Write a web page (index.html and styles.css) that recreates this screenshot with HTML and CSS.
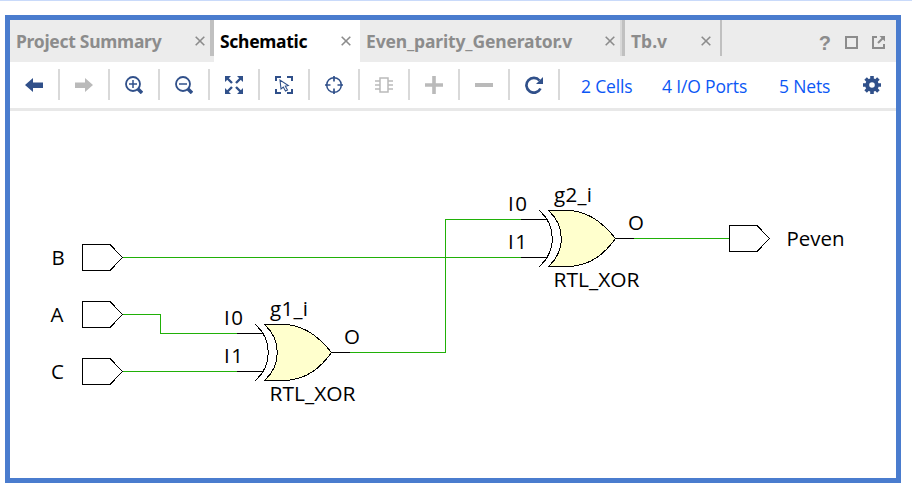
FILE: index.html
```html
<!DOCTYPE html>
<html lang="en">
<head>
<meta charset="utf-8">
<title>Schematic</title>
<link rel="stylesheet" href="styles.css">
</head>
<body>
<main class="window">
  <nav class="tabs">
    <div class="tab tab-summary"><span class="label">Project Summary</span><svg class="close" viewBox="0 0 10 10"><path d="M.7.7l8.6 8.6M9.3.7L.7 9.3"/></svg><i class="divider wide"></i></div>
    <div class="tab tab-schematic active"><span class="label">Schematic</span><svg class="close" viewBox="0 0 10 10"><path d="M.7.7l8.6 8.6M9.3.7L.7 9.3"/></svg></div>
    <div class="tab tab-source"><span class="label">Even_parity_Generator.v</span><svg class="close" viewBox="0 0 10 10"><path d="M.7.7l8.6 8.6M9.3.7L.7 9.3"/></svg><i class="divider double"></i></div>
    <div class="tab tab-bench"><span class="label">Tb.v</span><svg class="close" viewBox="0 0 10 10"><path d="M.7.7l8.6 8.6M9.3.7L.7 9.3"/></svg><i class="divider"></i></div>
    <div class="controls">
      <span class="help">?</span>
      <svg width="13" height="13" viewBox="0 0 13 13"><path d="M1 1h11v11H1z"/></svg>
      <svg width="13" height="13" viewBox="0 0 13 13"><path d="M5 1H1v11h11V8M6 7l5-5"/><path class="fill" d="M7.5 0H13v5.5z"/></svg>
    </div>
  </nav>
  <div class="toolbar">
    <div class="tool"><svg viewBox="0 0 18 18"><path class="solid" d="M0 9l8-7V6.500H18V12H8v4z"/></svg></div>
    <div class="tool off"><svg viewBox="0 0 18 18"><path class="solid" d="M18 9l-8-7V6.500H0V12H10v4z"/></svg></div>
    <div class="tool"><svg viewBox="0 0 18 18"><circle cx="8" cy="8" r="7" stroke-width="1.800"/><path d="M4 8h8M8 4v8" stroke-width="1.500"/><path d="M13 13l4 4" stroke-width="3.500"/></svg></div>
    <div class="tool"><svg viewBox="0 0 18 18"><circle cx="8" cy="8" r="7" stroke-width="1.800"/><path d="M4 8h8" stroke-width="1.500"/><path d="M13 13l4 4" stroke-width="3.500"/></svg></div>
    <div class="tool"><svg viewBox="0 0 18 18"><path d="M2 2l5 5M16 2l-5 5M2 16l5-5M16 16l-5-5" stroke-width="2.400"/><path class="solid" d="M0 0h6L0 6zM18 0h-6l6 6zM0 18h6l-6-6zM18 18h-6l6-6z"/></svg></div>
    <div class="tool"><svg viewBox="0 0 18 18"><path d="M1 5V1h5M12 1h5v4M1 13v4h5M12 17h5v-4" stroke-width="2"/><path d="M5 4l1 9 2.300-2 2.200 4 2-1-2.200-3.800 3-.7z" stroke-width="1.100"/></svg></div>
    <div class="tool"><svg viewBox="0 0 18 18"><circle cx="9" cy="9" r="7.300" stroke-width="1.500"/><path d="M9 0v5.500M9 12.500V18M0 9h5.500M12.500 9H18" stroke-width="1.700"/></svg></div>
    <div class="tool off"><svg viewBox="0 0 18 18"><path d="M5 2h8v14H5zM0 5h5M0 9h5M0 13h5M13 5h5M13 9h5M13 13h5" stroke-width="1.500"/></svg></div>
    <div class="tool off"><svg viewBox="0 0 18 18"><path d="M9 0v18M0 9h18" stroke-width="3.600"/></svg></div>
    <div class="tool off"><svg viewBox="0 0 18 18"><path d="M0 9h18" stroke-width="4"/></svg></div>
    <div class="tool"><svg viewBox="0 0 18 18"><path d="M14.500 4.500A7.400 7.400 0 1 0 15.500 12.500" stroke-width="2.700"/><path class="solid" d="M18 1v7h-7z"/></svg></div>
    <a class="link cells">2 Cells</a>
    <a class="link ports">4 I/O Ports</a>
    <a class="link nets">5 Nets</a>
    <svg class="gear" viewBox="0 0 18 18"><circle cx="9" cy="9" r="4.800" stroke-width="4"/><path d="M9 0v4M9 14v4M0 9h4M14 9h4M2.600 2.600l3 3M12.400 12.400l3 3M2.600 15.400l3-3M12.400 5.600l3-3" stroke-width="3.600"/></svg>
  </div>
  <svg class="schematic" width="886" height="367" viewBox="10 111 886 367">
    <defs>
      <path id="port" d="M.5 -13H28L40.500 0L28 13H.5z"/>
      <g id="xor">
        <path class="body" d="M9.500 -28.500H31C53 -27 67 -12 76.500 -.5C66 14 53 26 31 27.500H9.500C26.500 12 26.500 -13 9.500 -28.500z"/>
        <path d="M.5 -28.500C17.500 -13 17.500 12 .5 27.500M-18 -19.500H8.500M-18 18.500H8.500M76.500 -.5H95"/>
      </g>
    </defs>
    <g class="nets-lines">
      <path d="M122 257.500H521M122 314.500H160.500V333.500H237M122 371.500H237M350 352.500H445.500V219.500H521M634 238.500H729"/>
    </g>
    <g class="shapes">
      <use href="#port" x="82" y="257.500"/>
      <use href="#port" x="82" y="314.500"/>
      <use href="#port" x="82" y="371.500"/>
      <use href="#port" x="729" y="238.500"/>
      <use href="#xor" x="255" y="353"/>
      <use href="#xor" x="539" y="239"/>
    </g>
    <g class="names">
      <text x="51.500" y="265">B</text>
      <text x="50.500" y="322">A</text>
      <text x="51" y="379">C</text>
      <text x="224" y="325" textLength="19">I0</text>
      <text x="224" y="363" textLength="19">I1</text>
      <text x="508" y="211" textLength="19">I0</text>
      <text x="508" y="249" textLength="19">I1</text>
      <text x="270" y="316" textLength="38">g1_i</text>
      <text x="554" y="202" textLength="38">g2_i</text>
      <text x="269.500" y="401" textLength="86" lengthAdjust="spacingAndGlyphs">RTL_XOR</text>
      <text x="553.500" y="287" textLength="86" lengthAdjust="spacingAndGlyphs">RTL_XOR</text>
      <text x="344" y="344" textLength="16">O</text>
      <text x="628" y="230" textLength="16">O</text>
      <text x="786.500" y="246" textLength="58" lengthAdjust="spacingAndGlyphs">Peven</text>
    </g>
  </svg>
</main>
</body>
</html>
```
FILE: styles.css
```css
* { box-sizing: border-box; }
body {
  margin: 0;
  height: 492px;
  padding: 14px 11px 9px 5px;
  border-top: 1px solid #c9dafa;
  background: #fff;
  font-family: "Open Sans", "Noto Sans", sans-serif;
  overflow: hidden;
}
.window {
  width: 896px;
  height: 468px;
  border: 5px solid #4a7cce;
  background: #fff;
}
svg { display: block; flex: none; }
.tabs { display: flex; height: 42px; background: #ececec; }
.tab {
  display: flex;
  align-items: center;
  justify-content: space-between;
  position: relative;
  color: #8c8c8c;
  font-family: "Noto Sans", sans-serif;
  font-size: 17.5px;
  font-weight: 700;
  white-space: nowrap;
}
.tab .label { line-height: 42px; }
.tab-summary { width: 204px; padding: 0 9px 0 6px; letter-spacing: -0.28px; }
.tab-schematic { width: 146px; padding: 0 9px 0 6px; letter-spacing: -0.3px; }
.tab-source { width: 265px; padding: 0 10px 0 6px; letter-spacing: -0.15px; }
.tab-bench { width: 97px; padding: 0 11px 0 6px; }
.active { background: #fff; color: #000; }
.close { width: 10px; height: 10px; fill: none; stroke: #8c8c8c; stroke-width: 1.6; }
.divider { position: absolute; top: 0; right: 0; width: 2px; height: 36px; background: #c0c0c0; }
.divider.wide { width: 4px; }
.divider.double { width: 5px; border-left: 2px solid #d8d8d8; }
.controls { display: flex; align-items: center; gap: 14px; margin-left: auto; padding: 3px 11px 0 0; }
.controls svg { fill: none; stroke: #8c8c8c; stroke-width: 2; }
.controls .fill { fill: #8c8c8c; stroke: none; }
.help { color: #8c8c8c; font: 700 20px/20px "Liberation Sans", sans-serif; }
.toolbar {
  display: flex;
  height: 49px;
  align-items: flex-start;
  padding-top: 7px;
  border-bottom: 3px solid #e8e8e8;
}
.tool {
  width: 50px;
  height: 31px;
  padding: 7px 0 0 15px;
  border-right: 2px solid #d9d9d9;
}
.tool svg, .gear { width: 18px; height: 18px; fill: none; stroke: #30508a; }
.tool .solid { fill: #30508a; stroke: none; }
.tool.off svg { stroke: #bababa; }
.tool.off .solid { fill: #bababa; }
.link { color: #0b57f5; font-size: 17.5px; line-height: 35px; white-space: nowrap; letter-spacing: -0.15px; }
.cells { width: 81px; margin-left: 21px; }
.ports { width: 117px; }
.nets { width: 84px; }
.gear { margin-top: 7px; }
.nets-lines { fill: none; stroke: #20b008; shape-rendering: crispEdges; }
.shapes { fill: none; stroke: #000; shape-rendering: crispEdges; }
.body { fill: #ffffcd; }
.names { fill: #000; font-size: 20.5px; }
```
